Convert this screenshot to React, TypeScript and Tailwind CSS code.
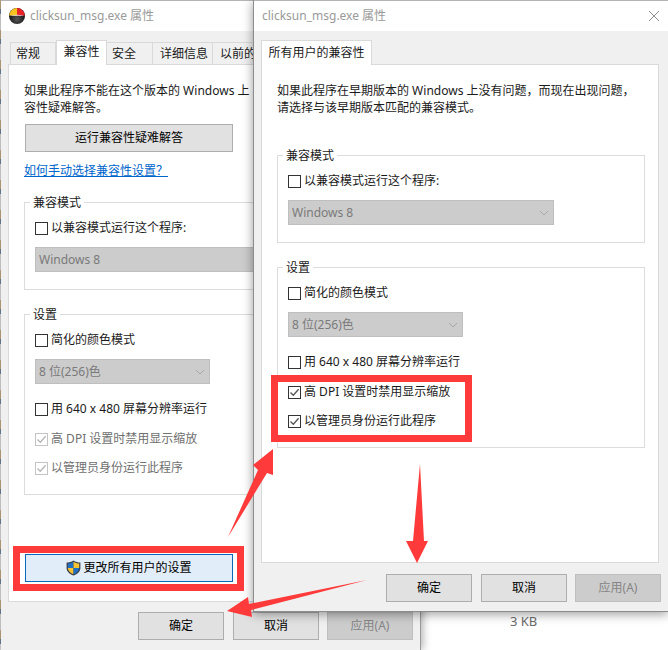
import type { ReactNode } from "react";

const font = "font-['Noto_Sans','Noto_Sans_CJK_SC',sans-serif]";

function AppIcon() {
  return (
    <svg width="16" height="16" viewBox="0 0 16 16" className="shrink-0">
      <defs>
        <radialGradient id="ball" cx="50%" cy="70%" r="60%">
          <stop offset="0%" stopColor="#555" />
          <stop offset="100%" stopColor="#0c0c0c" />
        </radialGradient>
      </defs>
      <circle cx="8" cy="8" r="8" fill="url(#ball)" />
      <path d="M0.2 7.5A8 8 0 0 1 8 0V7.5Z" fill="#f7c41f" />
      <path d="M8 0A8 8 0 0 1 15.8 7.5H8Z" fill="#ea2229" />
      <path d="M0.5 7.8H15.5Q8 5.5 0.5 7.8Z" fill="#fff" opacity="0.8" />
    </svg>
  );
}

function Shield() {
  return (
    <svg width="15" height="16" viewBox="0 0 15 16" className="shrink-0">
      <path d="M7.5 0.5C5.5 2 3 2.6 0.6 2.6V8C0.6 11.5 3.5 14.3 7.5 15.6C11.5 14.3 14.4 11.5 14.4 8V2.6C12 2.6 9.5 2 7.5 0.5Z" fill="#3a3f4a" />
      <path d="M7.5 1.8V8H1.8V3.6C3.8 3.5 5.8 3 7.5 1.8Z" fill="#1f6fc4" />
      <path d="M7.5 1.8C9.2 3 11.2 3.5 13.2 3.6V8H7.5Z" fill="#f7c331" />
      <path d="M1.8 8H7.5V14.2C4.4 13 1.9 11 1.8 8Z" fill="#f7c331" />
      <path d="M7.5 8H13.2C13.1 11 10.6 13 7.5 14.2Z" fill="#1f6fc4" />
    </svg>
  );
}

function Checkbox({ label, state = "off" }: { label: string; state?: "off" | "on" | "disabled" }) {
  const disabled = state === "disabled";
  const checked = state !== "off";
  return (
    <div className={`flex items-center h-[18px] gap-[3px] whitespace-nowrap ${disabled ? "text-[#6f6f6f]" : "text-[#1a1a1a]"}`}>
      <span className={`flex items-center justify-center w-[13px] h-[13px] border bg-white shrink-0 ${disabled ? "border-[#c4c4c4]" : "border-[#333333]"}`}>
        {checked && (
          <svg width="11" height="11" viewBox="0 0 11 11" fill="none">
            <path d="M1.5 5.5L4.3 8.3L9.6 2.2" stroke={disabled ? "#b5b5b5" : "#555555"} strokeWidth="1.3" />
          </svg>
        )}
      </span>
      <span>{label}</span>
    </div>
  );
}

function SelectBox({ value, width, className = "" }: { value: string; width: string; className?: string }) {
  return (
    <div className={`flex items-center justify-between h-[25px] ${width} bg-[#cccccc] border border-[#bfbfbf] pl-[3px] pr-[4px] text-[#7a7a7a] ${className}`}>
      <span>{value}</span>
      <svg width="10" height="6" viewBox="0 0 10 6" fill="none">
        <path d="M1 1L5 5L9 1" stroke="#a8a8a8" strokeWidth="1" />
      </svg>
    </div>
  );
}

function Group({ title, children, className = "" }: { title: string; children: ReactNode; className?: string }) {
  return (
    <div className={`border border-[#dcdcdc] px-[10px] pb-[17px] ${className}`}>
      <div className="-mt-[9px] -ml-[5px] mb-[7px] h-[18px] w-fit bg-white px-[3px] leading-[18px] text-[#1a1a1a]">{title}</div>
      {children}
    </div>
  );
}

function Btn({ children, disabled, className = "" }: { children: ReactNode; disabled?: boolean; className?: string }) {
  return (
    <div className={`flex items-center justify-center w-[86px] h-[28px] border ${disabled ? "bg-[#cccccc] border-[#bfbfbf] text-[#858585]" : "bg-[#e1e1e1] border-[#adadad] text-black"} ${className}`}>
      {children}
    </div>
  );
}

function Footer({ className = "" }: { className?: string }) {
  return (
    <div className={`flex justify-end ${className}`}>
      <Btn className="mr-[9px]">确定</Btn>
      <Btn className="mr-[8px]">取消</Btn>
      <Btn disabled>应用(A)</Btn>
    </div>
  );
}

function Settings({ active }: { active: boolean }) {
  const s = active ? "on" : "disabled";
  return (
    <Group title="设置" className="mt-[24px]">
      <Checkbox label="简化的颜色模式" />
      <SelectBox value="8 位(256)色" width="w-[175px]" className="mt-[10px]" />
      <div className="mt-[16px]">
        <Checkbox label="用 640 x 480 屏幕分辨率运行" />
      </div>
      <div className="mt-[12px]">
        <Checkbox label="高 DPI 设置时禁用显示缩放" state={s} />
      </div>
      <div className="mt-[11px]">
        <Checkbox label="以管理员身份运行此程序" state={s} />
      </div>
    </Group>
  );
}

function CompatMode() {
  return (
    <Group title="兼容模式">
      <Checkbox label="以兼容模式运行这个程序:" />
      <SelectBox value="Windows 8" width="w-[266px]" className="mt-[10px]" />
    </Group>
  );
}

function TitleBar({ icon }: { icon?: boolean }) {
  return (
    <div className="flex items-center h-[31px] bg-white shrink-0 gap-[5px] border-t border-[#b4b4b4] pl-[8px]">
      {icon && <AppIcon />}
      <span className="text-[#9a9a9a]">clicksun_msg.exe 属性</span>
      {!icon && (
        <svg width="12" height="12" viewBox="0 0 12 12" className="ml-auto mr-[8px]" fill="none">
          <path d="M1 1L11 11M11 1L1 11" stroke="#8e8e8e" strokeWidth="1" />
        </svg>
      )}
    </div>
  );
}

function BackWindow() {
  const tabs = [
    { t: "常规", cls: "w-[46px] pl-[5px] border-l" },
    { t: "兼容性", cls: "w-[51px]", active: true },
    { t: "安全", cls: "w-[46px] pl-[5px]" },
    { t: "详细信息", cls: "w-[60px] pl-[7px]" },
    { t: "以前的", cls: "w-[60px] pl-[7px]" },
  ];
  return (
    <div className="absolute left-[1px] top-0 w-[420px] h-[650px] flex flex-col bg-[#f0f0f0] px-[7px] border-r border-[#9a9a9a] shadow-[2px_0_8px_rgba(0,0,0,0.3)]">
      <div className="-mx-[7px]">
        <TitleBar icon />
      </div>
      <div className="flex h-[33px] items-end pl-[2px] whitespace-nowrap">
        {tabs.map((tab) =>
          tab.active ? (
            <div key={tab.t} className={`${tab.cls} h-[25px] -mb-[1px] relative z-10 bg-white border border-b-0 border-[#d9d9d9] text-center leading-[22px] text-[#1a1a1a]`}>
              {tab.t}
            </div>
          ) : (
            <div key={tab.t} className={`${tab.cls} h-[22px] bg-[#f0f0f0] border-r border-t border-[#d9d9d9] leading-[21px] text-[#1a1a1a]`}>
              {tab.t}
            </div>
          ),
        )}
      </div>
      <div className="h-[538px] w-[405px] bg-white border border-[#d9d9d9] px-[15px] pt-[17px]">
        <p className="h-[17px] leading-[17px] whitespace-nowrap text-[#1a1a1a]">如果此程序不能在这个版本的 Windows 上</p>
        <p className="h-[17px] leading-[17px] text-[#1a1a1a]">容性疑难解答。</p>
        <div className="flex items-center justify-center mt-[8px] ml-[1px] w-[208px] h-[28px] bg-[#e1e1e1] border border-[#adadad] text-black">运行兼容性疑难解答</div>
        <div className="mt-[10px] h-[18px] leading-[18px] text-[#0066cc] underline">如何手动选择兼容性设置？</div>
        <div className="mt-[22px]">
          <CompatMode />
          <Settings active={false} />
        </div>
        <div className="relative z-10 flex items-center justify-center gap-[2px] mt-[59px] ml-[1px] w-[208px] h-[28px] bg-[#e1edf8] border border-[#0a68b8] text-black">
          <Shield />
          更改所有用户的设置
        </div>
      </div>
      <Footer className="mt-[10px]" />
    </div>
  );
}

function FrontWindow() {
  return (
    <div className="absolute left-[253px] top-0 w-[415px] h-[612px] flex flex-col bg-[#f0f0f0] border-l border-b border-[#8c8c8c] shadow-[0_2px_10px_rgba(0,0,0,0.4)] px-[7px]">
      <div className="-mx-[7px]">
        <TitleBar />
      </div>
      <div className="flex h-[33px] items-end whitespace-nowrap">
        <div className="w-[111px] h-[25px] -mb-[1px] relative z-10 bg-white border border-b-0 border-[#d9d9d9] text-center leading-[23px] text-[#1a1a1a]">所有用户的兼容性</div>
      </div>
      <div className="h-[499px] w-[398px] bg-white border border-[#d9d9d9] px-[15px] pt-[17px]">
        <p className="h-[17px] leading-[17px] whitespace-nowrap text-[#1a1a1a]">如果此程序在早期版本的 Windows 上没有问题，而现在出现问题，</p>
        <p className="h-[17px] leading-[17px] text-[#1a1a1a]">请选择与该早期版本匹配的兼容模式。</p>
        <div className="mt-[39px] w-[368px]">
          <CompatMode />
          <Settings active />
        </div>
      </div>
      <Footer className="mt-[11px]" />
    </div>
  );
}

export default function App() {
  return (
    <div className={`relative w-[668px] h-[650px] overflow-hidden bg-white text-[12px] leading-[18px] ${font}`}>
      {/* desktop and file list peeking out behind the dialogs */}
      <div className="absolute left-0 top-0 w-[1px] h-full bg-[repeating-linear-gradient(180deg,#b9a27e_0,#b9a27e_9px,#6a7c92_9px,#6a7c92_14px,#d0d0d0_14px,#d0d0d0_30px)]" />
      <div className="absolute left-[510px] top-[612px] text-[13px] text-[#6d6d6d]">3 KB</div>
      <div className="absolute left-[497px] top-[638px] h-[2px] overflow-hidden text-[13px] leading-[14px] text-[#6d6d6d]">544 KB</div>
      <BackWindow />
      <FrontWindow />

      {/* red annotations */}
      <div className="absolute left-[271px] top-[375px] w-[201px] h-[67px] border-[7px] border-[#fe3a3a]" />
      <div className="absolute left-[13px] top-[546px] w-[231px] h-[45px] border-[7px] border-[#fe3a3a]" />
      <svg width="668" height="650" viewBox="0 0 668 650" className="absolute left-0 top-0 pointer-events-none">
        <polygon points="228,537 258,470 253,465 273,449 273,475 267,473" fill="#fe3a3a" />
        <polygon points="420,464 424,541 428,541 417,563 406,541 413,541" fill="#fe3a3a" />
        <polygon points="367,580 249,604 248,597 227,611 252,617 251,610" fill="#fe3a3a" />
      </svg>
    </div>
  );
}
